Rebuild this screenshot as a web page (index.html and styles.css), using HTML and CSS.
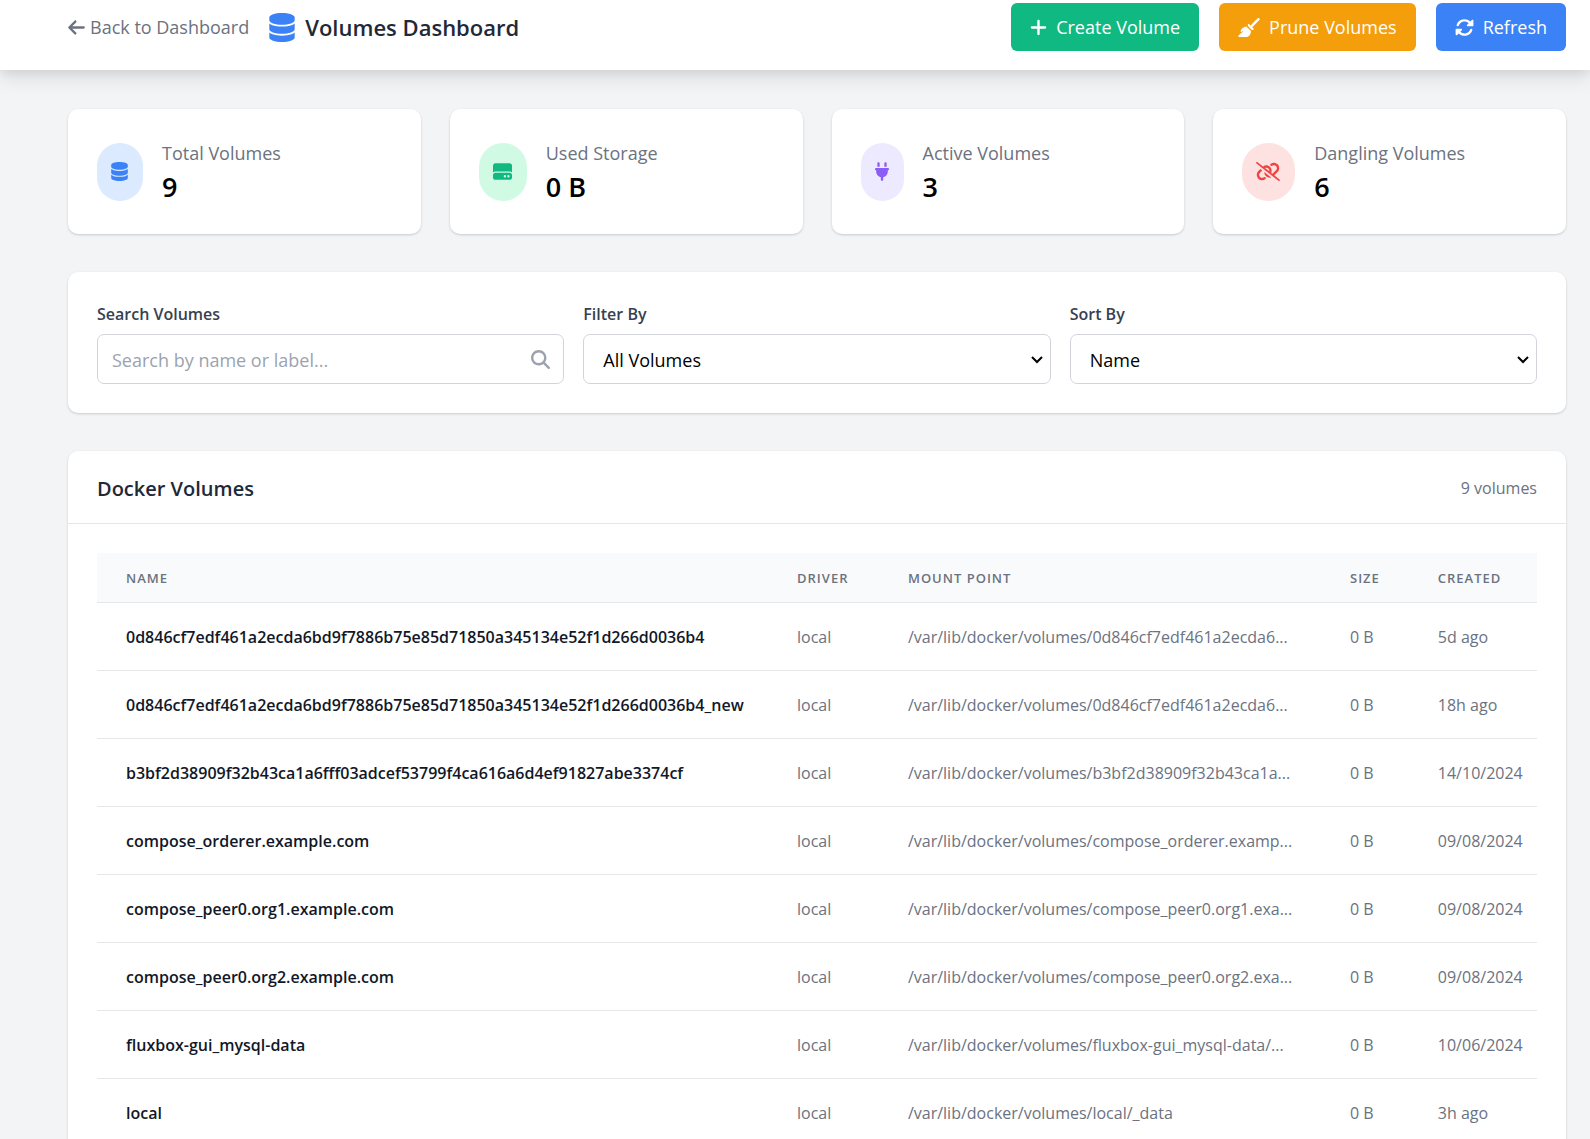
FILE: index.html
```html
<!DOCTYPE html>
<html lang="en">
<head>
<meta charset="utf-8">
<title>Volumes Dashboard</title>
<link rel="stylesheet" href="styles.css">
</head>
<body>
<svg class="sprite" aria-hidden="true">
  <symbol id="database" viewBox="0 0 448 512"><path d="M448 80v48c0 44.2-100.3 80-224 80S0 172.2 0 128V80C0 35.8 100.3 0 224 0S448 35.8 448 80zM393.2 214.7c20.8-7.4 39.9-16.9 54.8-28.6V288c0 44.2-100.3 80-224 80S0 332.2 0 288V186.1c14.9 11.8 34 21.2 54.8 28.6C99.7 230.7 159.5 240 224 240s124.3-9.3 169.2-25.3zM0 346.1c14.9 11.8 34 21.2 54.8 28.6C99.7 390.7 159.5 400 224 400s124.3-9.3 169.2-25.3c20.8-7.4 39.9-16.9 54.8-28.6V432c0 44.2-100.3 80-224 80S0 476.2 0 432V346.1z"/></symbol>
  <symbol id="chevron" viewBox="0 0 12 8"><path d="M1 1l5 5 5-5" fill="none" stroke="#000" stroke-width="2"/></symbol>
</svg>

<header class="topbar">
  <div class="topbar-left">
    <a class="back" href="#"><svg class="icon w17" viewBox="0 0 448 512"><path d="M9.4 233.4c-12.5 12.5-12.5 32.8 0 45.3l160 160c12.5 12.5 32.8 12.5 45.3 0s12.5-32.8 0-45.3L109.2 288 416 288c17.7 0 32-14.3 32-32s-14.3-32-32-32l-306.7 0L214.6 118.6c12.5-12.5 12.5-32.8 0-45.3s-32.8-12.5-45.3 0l-160 160z"/></svg>Back to Dashboard</a>
    <h1 class="page-title"><svg class="title-icon"><use href="#database"/></svg>Volumes Dashboard</h1>
  </div>
  <div class="actions">
    <button class="btn green" type="button"><svg class="icon w17" viewBox="0 0 448 512"><path d="M256 80c0-17.7-14.3-32-32-32s-32 14.3-32 32V224H48c-17.7 0-32 14.3-32 32s14.3 32 32 32H192V432c0 17.7 14.3 32 32 32s32-14.3 32-32V288H400c17.7 0 32-14.3 32-32s-14.3-32-32-32H256V80z"/></svg>Create Volume</button>
    <button class="btn amber" type="button"><svg class="icon w22" viewBox="0 0 576 512"><path d="M566.6 54.6c12.5-12.5 12.5-32.8 0-45.3s-32.8-12.5-45.3 0l-192 192-34.7-34.7c-4.2-4.2-10-6.6-16-6.6c-12.5 0-22.6 10.1-22.6 22.6v29.1L364.3 320h29.1c12.5 0 22.6-10.1 22.6-22.6c0-6-2.4-11.8-6.6-16l-34.7-34.7 192-192zM341.1 353.4L222.6 234.9c-42.7-3.7-85.2 11.7-115.8 42.3l-8 8C76.5 307.5 64 337.7 64 369.2c0 6.8 7.1 11.2 13.2 8.2l51.1-25.5c5-2.5 9.5 4.1 5.4 7.9L7.3 473.4C2.7 477.6 0 483.6 0 489.9C0 502.1 9.9 512 22.1 512l173.3 0c38.8 0 75.9-15.4 103.4-42.8c30.6-30.6 45.9-73.1 42.3-115.8z"/></svg>Prune Volumes</button>
    <button class="btn blue" type="button"><svg class="icon w19" viewBox="0 0 512 512"><path d="M142.9 142.9c62.2-62.2 162.7-62.5 225.3-1L327 183c-6.9 6.9-8.9 17.2-5.2 26.2s12.5 14.8 22.2 14.8H463.5H472c13.3 0 24-10.7 24-24V72c0-9.7-5.8-18.5-14.8-22.2s-19.3-1.7-26.2 5.2L413.4 96.6c-87.6-86.5-228.7-86.2-315.8 1C73.2 122 55.6 150.7 44.8 181.4c-5.9 16.7 2.9 34.9 19.5 40.8s34.9-2.9 40.8-19.5c7.7-21.8 20.2-42.3 37.8-59.8zM16 312v7.6 .7V440c0 9.7 5.8 18.5 14.8 22.2s19.3 1.7 26.2-5.2l41.6-41.6c87.6 86.5 228.7 86.2 315.8-1c24.4-24.4 42.1-53.1 52.9-83.7c5.9-16.7-2.9-34.9-19.5-40.8s-34.9 2.9-40.8 19.5c-7.7 21.8-20.2 42.3-37.8 59.8c-62.2 62.2-162.7 62.5-225.3 1L185 329c6.9-6.9 8.9-17.2 5.2-26.2s-12.5-14.8-22.2-14.8H48.4h-.7H40c-13.3 0-24 10.7-24 24z"/></svg>Refresh</button>
  </div>
</header>

<main class="content">
  <section class="stats">
    <div class="card stat">
      <span class="badge badge-blue"><svg class="icon w17"><use href="#database"/></svg></span>
      <div><p class="stat-label">Total Volumes</p><p class="stat-value">9</p></div>
    </div>
    <div class="card stat">
      <span class="badge badge-green"><svg class="icon w19" viewBox="0 0 512 512"><path d="M0 96C0 60.7 28.7 32 64 32H448c35.3 0 64 28.7 64 64V280.4c-17-15.2-39.4-24.4-64-24.4H64c-24.6 0-47 9.2-64 24.4V96zM64 288H448c35.3 0 64 28.7 64 64v64c0 35.3-28.7 64-64 64H64c-35.3 0-64-28.7-64-64V352c0-35.3 28.7-64 64-64zM320 416a32 32 0 1 0 0-64 32 32 0 1 0 0 64zm128-32a32 32 0 1 0 -64 0 32 32 0 1 0 64 0z"/></svg></span>
      <div><p class="stat-label">Used Storage</p><p class="stat-value">0 B</p></div>
    </div>
    <div class="card stat">
      <span class="badge badge-purple"><svg class="icon w14" viewBox="0 0 384 512"><path d="M96 0C78.3 0 64 14.3 64 32v96h64V32c0-17.7-14.3-32-32-32zM288 0c-17.7 0-32 14.3-32 32v96h64V32c0-17.7-14.3-32-32-32zM32 160c-17.7 0-32 14.3-32 32s14.3 32 32 32v32c0 77.4 55 142 128 156.8V480c0 17.7 14.3 32 32 32s32-14.3 32-32V412.8C297 398 352 333.4 352 256V224c17.7 0 32-14.3 32-32s-14.3-32-32-32H32z"/></svg></span>
      <div><p class="stat-label">Active Volumes</p><p class="stat-value">3</p></div>
    </div>
    <div class="card stat">
      <span class="badge badge-red"><svg class="icon w24" viewBox="0 0 640 512"><path d="M38.8 5.1C28.4-3.1 13.3-1.2 5.1 9.2S-1.2 34.7 9.2 42.9l592 464c10.4 8.2 25.5 6.3 33.7-4.1s6.3-25.5-4.1-33.7L489.3 358.2l90.5-90.5c56.5-56.5 56.5-148 0-204.5c-50-50-128.8-56.5-186.3-15.4l-1.6 1.1c-14.4 10.3-17.7 30.3-7.4 44.6s30.3 17.7 44.6 7.4l1.6-1.1c32.1-22.9 76-19.3 103.8 8.6c31.5 31.5 31.5 82.5 0 114l-96 96-31.9-25C430.9 239.6 420.1 175.1 377 132c-52.2-52.3-134.5-56.2-191.3-11.7L38.8 5.1zM239 162c30.1-14.9 67.7-9.9 92.8 15.3c20 20 27.5 48.3 21.7 74.5L239 162zM406.6 416.4L220.9 270c-2.1 39.8 12.2 80.1 42.2 110c38.9 38.9 94.4 51 143.6 36.3zm-290-228.5L60.2 244.3c-56.5 56.5-56.5 148 0 204.5c50 50 128.8 56.5 186.3 15.4l1.6-1.1c14.4-10.3 17.7-30.3 7.4-44.6s-30.3-17.7-44.6-7.4l-1.6 1.1c-32.1 22.9-76 19.3-103.8-8.6C74 372 74 321 105.5 289.5l61.8-61.8-50.6-39.9z"/></svg></span>
      <div><p class="stat-label">Dangling Volumes</p><p class="stat-value">6</p></div>
    </div>
  </section>

  <section class="card filters">
    <div class="field">
      <label for="search">Search Volumes</label>
      <div class="control-wrap">
        <input class="control" id="search" type="text" placeholder="Search by name or label...">
        <svg class="icon w19 search-icon" viewBox="0 0 512 512"><path d="M416 208c0 45.9-14.9 88.3-40 122.7L502.6 457.4c12.5 12.5 12.5 32.8 0 45.3s-32.8 12.5-45.3 0L330.7 376c-34.4 25.2-76.8 40-122.7 40C93.1 416 0 322.9 0 208S93.1 0 208 0S416 93.1 416 208zM208 352a144 144 0 1 0 0-288 144 144 0 1 0 0 288z"/></svg>
      </div>
    </div>
    <div class="field">
      <label for="filter">Filter By</label>
      <div class="control-wrap">
        <select class="control" id="filter"><option>All Volumes</option></select>
        <svg class="chevron"><use href="#chevron"/></svg>
      </div>
    </div>
    <div class="field">
      <label for="sort">Sort By</label>
      <div class="control-wrap">
        <select class="control" id="sort"><option>Name</option></select>
        <svg class="chevron"><use href="#chevron"/></svg>
      </div>
    </div>
  </section>

  <section class="card volumes">
    <div class="volumes-head">
      <h2>Docker Volumes</h2>
      <span class="count">9 volumes</span>
    </div>
    <div class="table-wrap">
      <table>
        <colgroup><col class="c-name"><col class="c-driver"><col class="c-mount"><col class="c-size"><col class="c-created"></colgroup>
        <thead>
          <tr><th>Name</th><th>Driver</th><th>Mount Point</th><th>Size</th><th>Created</th></tr>
        </thead>
        <tbody>
          <tr><td>0d846cf7edf461a2ecda6bd9f7886b75e85d71850a345134e52f1d266d0036b4</td><td>local</td><td>/var/lib/docker/volumes/0d846cf7edf461a2ecda6...</td><td>0 B</td><td>5d ago</td></tr>
          <tr><td>0d846cf7edf461a2ecda6bd9f7886b75e85d71850a345134e52f1d266d0036b4_new</td><td>local</td><td>/var/lib/docker/volumes/0d846cf7edf461a2ecda6...</td><td>0 B</td><td>18h ago</td></tr>
          <tr><td>b3bf2d38909f32b43ca1a6fff03adcef53799f4ca616a6d4ef91827abe3374cf</td><td>local</td><td>/var/lib/docker/volumes/b3bf2d38909f32b43ca1a...</td><td>0 B</td><td>14/10/2024</td></tr>
          <tr><td>compose_orderer.example.com</td><td>local</td><td>/var/lib/docker/volumes/compose_orderer.examp...</td><td>0 B</td><td>09/08/2024</td></tr>
          <tr><td>compose_peer0.org1.example.com</td><td>local</td><td>/var/lib/docker/volumes/compose_peer0.org1.exa...</td><td>0 B</td><td>09/08/2024</td></tr>
          <tr><td>compose_peer0.org2.example.com</td><td>local</td><td>/var/lib/docker/volumes/compose_peer0.org2.exa...</td><td>0 B</td><td>09/08/2024</td></tr>
          <tr><td>fluxbox-gui_mysql-data</td><td>local</td><td>/var/lib/docker/volumes/fluxbox-gui_mysql-data/...</td><td>0 B</td><td>10/06/2024</td></tr>
          <tr><td>local</td><td>local</td><td>/var/lib/docker/volumes/local/_data</td><td>0 B</td><td>3h ago</td></tr>
        </tbody>
      </table>
    </div>
  </section>
</main>
</body>
</html>
```
FILE: styles.css
```css
* { box-sizing: border-box; }

body {
  margin: 0;
  background: #f3f4f6;
  color: #000;
  font: 18px/29px "Open Sans", "Noto Sans", sans-serif;
}

h1, h2, p { margin: 0; }

button, input, select { font: inherit; }

.sprite { display: none; }

.icon {
  flex: none;
  height: 19px;
  fill: currentColor;
}
.w14 { width: 14px; }
.w17 { width: 17px; }
.w19 { width: 19px; }
.w22 { width: 22px; }
.w24 { width: 24px; }

/* Top bar */
.topbar {
  display: flex;
  justify-content: space-between;
  align-items: center;
  padding: 3px 24px 19px 68px;
  background: #fff;
  box-shadow: 0 8px 18px rgba(0, 0, 0, .1), 0 3px 8px rgba(0, 0, 0, .06);
}

.topbar-left {
  display: flex;
  align-items: center;
  gap: 20px;
}

.back {
  display: flex;
  align-items: center;
  gap: 5px;
  color: #6b7280;
  text-decoration: none;
}

.page-title {
  display: flex;
  align-items: center;
  gap: 10px;
  color: #1f2937;
  font-size: 22px;
  font-weight: 600;
}

.title-icon {
  width: 26px;
  height: 29px;
  fill: #3b82f6;
}

.actions {
  display: flex;
  gap: 20px;
}

.btn {
  display: flex;
  align-items: center;
  gap: 9px;
  height: 48px;
  padding: 0 19px;
  border: 0;
  border-radius: 6px;
  color: #fff;
}
.green { background: #10b981; }
.amber { background: #f59e0b; }
.blue { background: #3b82f6; }

/* Content */
.content {
  display: flex;
  flex-direction: column;
  gap: 38px;
  padding: 39px 24px 38px 68px;
}

.card {
  background: #fff;
  border-radius: 10px;
  box-shadow: 0 1px 3px rgba(0, 0, 0, .1), 0 1px 2px rgba(0, 0, 0, .08);
}

.stats {
  display: grid;
  grid-template-columns: repeat(4, 1fr);
  gap: 29px;
}

.stat {
  display: flex;
  align-items: center;
  gap: 19px;
  padding: 29px;
}

.badge {
  display: flex;
  align-items: center;
  height: 58px;
  padding: 0 15px 0 14px;
  border-radius: 29px;
}
.badge-blue { background: #dbeafe; color: #3b82f6; }
.badge-green { background: #d1fae5; color: #10b981; }
.badge-purple { background: #ede9fe; color: #8b5cf6; }
.badge-red { background: #fee2e2; color: #ef4444; }

.stat-label {
  color: #6b7280;
  line-height: 31px;
}

.stat-value {
  font-size: 27px;
  font-weight: 600;
  line-height: 36px;
}

/* Filters */
.filters {
  display: grid;
  grid-template-columns: repeat(3, 1fr);
  gap: 19px;
  padding: 29px;
}

.field label {
  display: block;
  margin-bottom: 7px;
  color: #374151;
  font-size: 16px;
  font-weight: 600;
  line-height: 26px;
}

.control {
  display: block;
  width: 100%;
  height: 50px;
  padding: 2px 14px 0;
  border: 1px solid #d1d5db;
  border-radius: 7px;
  background: #fff;
  color: #000;
}

select.control {
  padding-left: 19px;
  appearance: none;
}

.control::placeholder { color: #9ca3af; }

.control-wrap { position: relative; }

.search-icon {
  position: absolute;
  top: 16px;
  right: 14px;
  color: #9ca3af;
}

.chevron {
  position: absolute;
  top: 22px;
  right: 8px;
  width: 12px;
  height: 8px;
  pointer-events: none;
}

/* Volume table */
.volumes-head {
  display: flex;
  justify-content: space-between;
  align-items: center;
  height: 73px;
  padding: 2px 29px 0;
  border-bottom: 1px solid #e5e7eb;
}

.volumes-head h2 {
  color: #1f2937;
  font-size: 20px;
  font-weight: 600;
}

.count {
  color: #6b7280;
  font-size: 16px;
}

.table-wrap { padding: 29px; }

table {
  width: 100%;
  table-layout: fixed;
  border-collapse: collapse;
  font-size: 16px;
}

.c-name { width: 46.6%; }
.c-driver { width: 7.7%; }
.c-mount { width: 30.7%; }
.c-size { width: 6.1%; }
.c-created { width: 8.9%; }

th, td {
  padding: 2px 0 0 29px;
  border-bottom: 1px solid #e5e7eb;
  text-align: left;
  white-space: nowrap;
}

th {
  height: 49px;
  background: #f9fafb;
  color: #6b7280;
  font-size: 13px;
  font-weight: 600;
  letter-spacing: 1px;
  text-transform: uppercase;
}

td {
  height: 68px;
  color: #6b7280;
}

td:first-child {
  color: #111827;
  font-weight: 600;
}
```
